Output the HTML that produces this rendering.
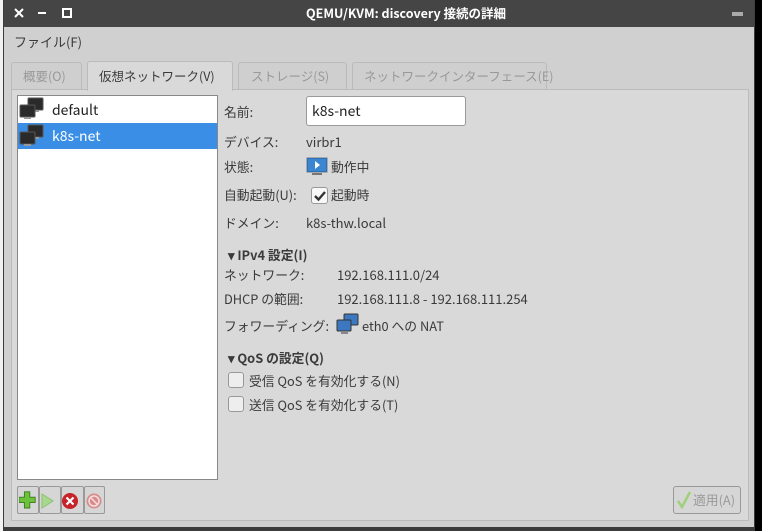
<!DOCTYPE html>
<html><head><meta charset="utf-8"><style>
*{margin:0;padding:0;box-sizing:border-box}
body{width:762px;height:531px;overflow:hidden;background:#000;position:relative;font-family:"Noto Sans CJK JP","Liberation Sans",sans-serif;font-size:12.8px;color:#3a3a3a}
.a{position:absolute;white-space:nowrap}
.t{line-height:16px}
.tab{font-size:12.5px}
</style></head><body>
<div class="a" style="left:0;top:0;width:4px;height:531px;background:#f2f2f2"></div>
<div class="a" style="left:3px;top:0;width:752px;height:531px;background:#3c3c3c"></div>
<div class="a" style="left:4px;top:27px;width:750px;height:500px;background:#d0d0d0"></div>
<div class="a" style="left:4px;top:0;width:750px;height:27px;background:#454545"></div>
<svg class="a" style="left:14px;top:8px" width="60" height="12"><path d="M1 1L9 9M9 1L1 9" stroke="#fff" stroke-width="2"/><rect x="24" y="4" width="8" height="2" fill="#fff"/><rect x="49" y="1" width="8" height="8" fill="none" stroke="#fff" stroke-width="2"/></svg>
<div class="a t" style="left:306px;top:5px;color:#fff;font-weight:bold;font-size:12.5px">QEMU/KVM: discovery 接続の詳細</div>
<div class="a" style="left:732px;top:12px;width:11px;height:4px;background:#aaa"></div>
<div class="a t" style="left:14px;top:34px;font-size:13px">ファイル(F)</div>
<div class="a" style="left:11px;top:62px;width:71px;height:28px;border:1px solid #bbb;border-bottom:none;border-radius:3px 3px 0 0;background:#cfcfcf"></div>
<div class="a t tab" style="left:23px;top:68px;color:#999">概要(O)</div>
<div class="a" style="left:87px;top:61px;width:146px;height:30px;border:1px solid #bbb;border-bottom:none;border-radius:3px 3px 0 0;background:#d9d9d9;z-index:2"></div>
<div class="a t tab" style="left:99px;top:68px;z-index:3">仮想ネットワーク(V)</div>
<div class="a" style="left:238px;top:62px;width:109px;height:28px;border:1px solid #bbb;border-bottom:none;border-radius:3px 3px 0 0;background:#cfcfcf"></div>
<div class="a t tab" style="left:251px;top:68px;color:#999">ストレージ(S)</div>
<div class="a" style="left:352px;top:62px;width:195px;height:28px;border:1px solid #bbb;border-bottom:none;border-radius:3px 3px 0 0;background:#cfcfcf"></div>
<div class="a t tab" style="left:364px;top:68px;color:#999">ネットワークインターフェース(E)</div>
<div class="a" style="left:11px;top:89px;width:738px;height:432px;border:1px solid #bbb;background:#d9d9d9"></div>
<div class="a" style="left:17px;top:95px;width:201px;height:385px;border:1px solid #888;background:#fff"></div>
<div class="a" style="left:18px;top:123px;width:199px;height:26px;background:#3a8ee6"></div>
<svg class="a" style="left:19px;top:97px" width="26" height="24"><rect x="9" y="1" width="15" height="12" rx="1" fill="#2a2a2a" stroke="#555"/><rect x="13" y="13" width="7" height="2" fill="#999"/><rect x="1" y="8" width="15" height="12" rx="1" fill="#2a2a2a" stroke="#555"/><rect x="5" y="20" width="7" height="2" fill="#999"/></svg>
<svg class="a" style="left:19px;top:124px" width="26" height="24"><rect x="9" y="1" width="15" height="12" rx="1" fill="#2a2a2a" stroke="#555"/><rect x="13" y="13" width="7" height="2" fill="#999"/><rect x="1" y="8" width="15" height="12" rx="1" fill="#2a2a2a" stroke="#555"/><rect x="5" y="20" width="7" height="2" fill="#999"/></svg>
<div class="a t" style="left:52px;top:102px;font-size:14px;color:#222">default</div>
<div class="a t" style="left:52px;top:128px;font-size:14px;color:#fff">k8s-net</div>
<div class="a t" style="left:224px;top:104px">名前:</div>
<div class="a" style="left:306px;top:96px;width:160px;height:30px;border:1px solid #999;border-radius:3px;background:#fff"></div>
<div class="a t" style="left:312px;top:103px;font-size:14px;color:#222">k8s-net</div>
<div class="a t" style="left:224px;top:134px">デバイス:</div>
<div class="a t" style="left:306px;top:134px;font-size:13px">virbr1</div>
<div class="a t" style="left:224px;top:159px">状態:</div>
<svg class="a" style="left:306px;top:157px" width="22" height="20"><rect x="0.5" y="0.5" width="21" height="15" rx="1" fill="#2f6fb5" stroke="#aaa"/><rect x="2" y="2" width="18" height="12" fill="#3a86d0"/><path d="M9 4L14 8L9 12Z" fill="#fff"/><rect x="6" y="16" width="10" height="2" fill="#777"/></svg>
<div class="a t" style="left:331px;top:159px">動作中</div>
<div class="a t" style="left:224px;top:187px">自動起動(U):</div>
<div class="a" style="left:311px;top:187px;width:17px;height:17px;border:1px solid #999;border-radius:3px;background:#f8f8f8"></div>
<svg class="a" style="left:313px;top:189px" width="14" height="13"><path d="M2 7L5.5 10.5L12 3" stroke="#333" stroke-width="2.4" fill="none"/></svg>
<div class="a t" style="left:331px;top:187px">起動時</div>
<div class="a t" style="left:224px;top:215px">ドメイン:</div>
<div class="a t" style="left:306px;top:215px;font-size:13px">k8s-thw.local</div>
<div class="a t" style="left:228px;top:247px;font-weight:bold">▾ IPv4 設定(I)</div>
<div class="a t" style="left:224px;top:267px">ネットワーク:</div>
<div class="a t" style="left:337px;top:267px;font-size:13px">192.168.111.0/24</div>
<div class="a t" style="left:224px;top:291px">DHCP の範囲:</div>
<div class="a t" style="left:337px;top:291px;font-size:13px">192.168.111.8 - 192.168.111.254</div>
<div class="a t" style="left:224px;top:318px">フォワーディング:</div>
<svg class="a" style="left:336px;top:313px" width="24" height="23"><rect x="8" y="1" width="14" height="11" rx="1" fill="#3b78bf" stroke="#333"/><rect x="1" y="7" width="14" height="11" rx="1" fill="#3b78bf" stroke="#333"/><rect x="5" y="19" width="7" height="2" fill="#888"/></svg>
<div class="a t" style="left:362px;top:318px">eth0 への NAT</div>
<div class="a t" style="left:228px;top:350px;font-weight:bold">▾ QoS の設定(Q)</div>
<div class="a" style="left:228px;top:372px;width:16px;height:16px;border:1px solid #999;border-radius:3px;background:#eee"></div>
<div class="a t" style="left:249px;top:373px">受信 QoS を有効化する(N)</div>
<div class="a" style="left:228px;top:396px;width:16px;height:16px;border:1px solid #999;border-radius:3px;background:#eee"></div>
<div class="a t" style="left:249px;top:397px">送信 QoS を有効化する(T)</div>
<div class="a" style="left:17px;top:486px;width:22px;height:28px;border:1px solid #999;border-radius:2px;background:#d6d6d6"></div>
<div class="a" style="left:39px;top:486px;width:22px;height:28px;border:1px solid #999;border-radius:2px;background:#d6d6d6"></div>
<div class="a" style="left:61px;top:486px;width:23px;height:28px;border:1px solid #999;border-radius:2px;background:#d6d6d6"></div>
<div class="a" style="left:84px;top:486px;width:21px;height:28px;border:1px solid #999;border-radius:2px;background:#d6d6d6"></div>
<svg class="a" style="left:19px;top:491px" width="86" height="20"><path d="M6 2h6v6h6v6h-6v6h-6v-6h-6v-6h6z" transform="translate(0,-1) scale(0.9)" fill="#6cc23a" stroke="#3d7a1e"/><path d="M23 3L34 10L23 17Z" fill="#a8d890" stroke="#8bbf73"/><circle cx="51" cy="10" r="8" fill="#c8222a"/><path d="M47.5 6.5L54.5 13.5M54.5 6.5L47.5 13.5" stroke="#fff" stroke-width="2.2"/><circle cx="75" cy="10" r="7.5" fill="#d98b8b"/><circle cx="75" cy="10" r="5" fill="none" stroke="#f2dede" stroke-width="1.5"/><path d="M71.5 6.5L78.5 13.5" stroke="#f2dede" stroke-width="1.5"/></svg>
<div class="a" style="left:673px;top:486px;width:68px;height:28px;border:1px solid #999;border-radius:3px;background:#d6d6d6"></div>
<svg class="a" style="left:676px;top:490px" width="16" height="20"><path d="M2 11L6 17L14 2" stroke="#9fd07a" stroke-width="2.5" fill="none"/></svg>
<div class="a t" style="left:693px;top:492px;color:#999">適用(A)</div>
</body></html>
